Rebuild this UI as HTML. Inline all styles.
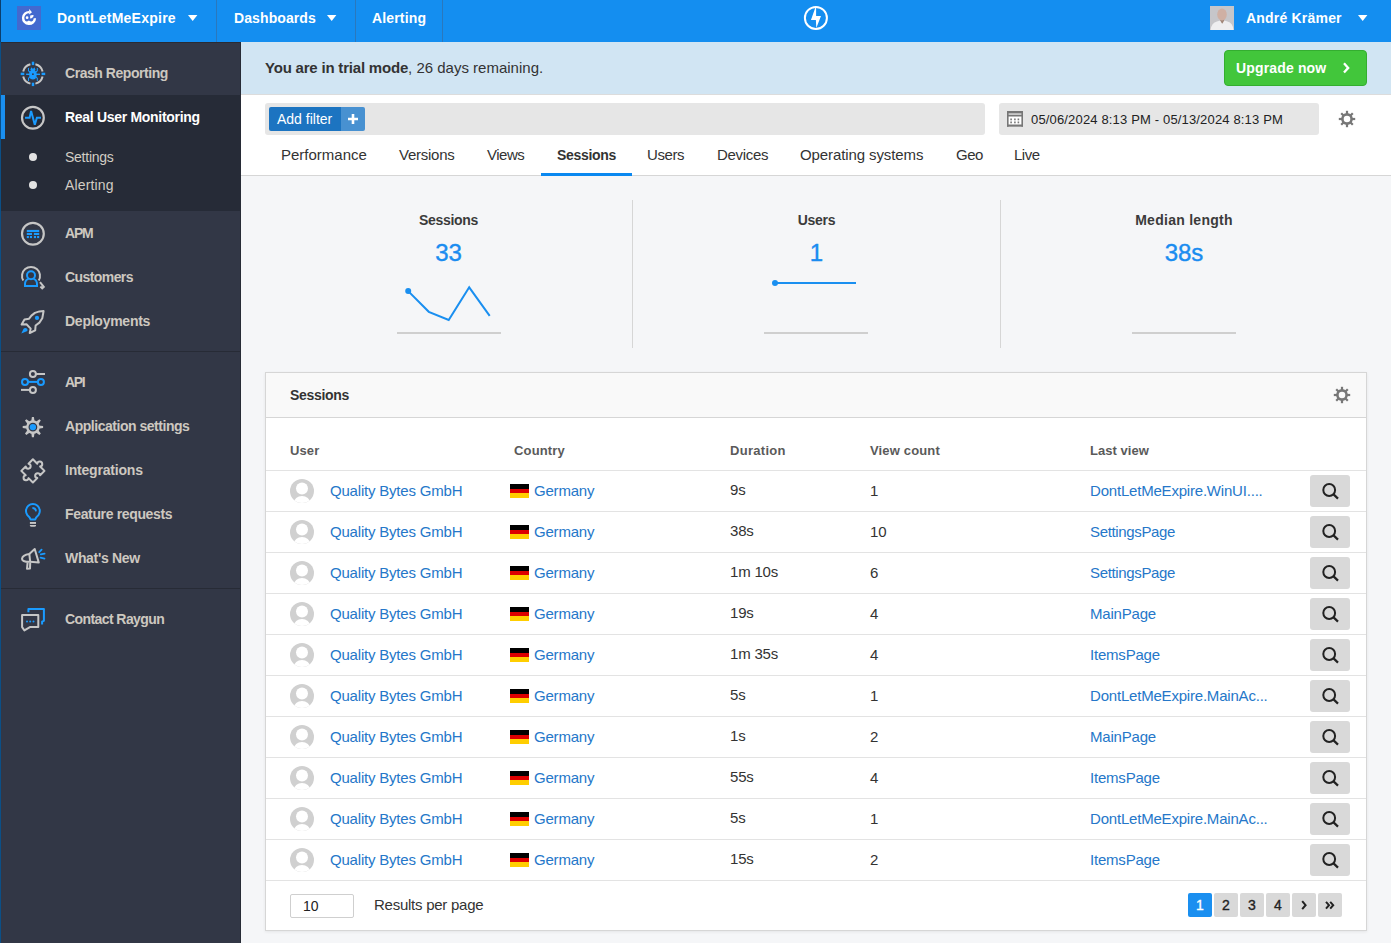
<!DOCTYPE html>
<html><head><meta charset="utf-8">
<style>
*{box-sizing:border-box;margin:0;padding:0}
html,body{width:1391px;height:943px;overflow:hidden;background:#f5f6f8;font-family:"Liberation Sans",sans-serif;color:#333}
.abs{position:absolute}
#hdr{position:absolute;left:0;top:0;width:1391px;height:42px;background:#148ef0}
#hdr .edge{position:absolute;left:0;top:0;width:1px;height:42px;background:#0b3f6e}
.htxt{position:absolute;top:0;height:36px;line-height:36px;color:#fff;font-weight:bold;font-size:14px;white-space:nowrap}
.tri{position:absolute;top:15px;width:10px;height:6px}
.hdiv{position:absolute;top:0;width:1px;height:42px;background:#2a78bd}
#side{position:absolute;left:0;top:42px;width:241px;height:901px;background:#323746}
#side .edge{position:absolute;left:0;top:0;width:1px;height:901px;background:#0b4f86}
#side .rb{position:absolute;right:0;top:0;width:1px;height:901px;background:#272b36}
.sitem{position:absolute;left:65px;color:#cdc8c0;font-weight:bold;font-size:14px;white-space:nowrap;line-height:20px}
.sub{position:absolute;left:65px;color:#d2cdc4;font-size:14px;white-space:nowrap;line-height:20px}
.dot{position:absolute;left:29px;width:8px;height:8px;border-radius:50%;background:#e3e3e3}
.ico{position:absolute;left:19px}
#main{position:absolute;left:0;top:0;width:1391px;height:943px}
.link{color:#2577c9}
.txt15{position:absolute;line-height:20px;font-size:15px;white-space:nowrap}
.tab{position:absolute;top:145px;line-height:20px;font-size:15px;color:#333;white-space:nowrap}
.stl{position:absolute;top:210px;line-height:20px;font-size:14px;font-weight:bold;color:#3b3b3b;text-align:center;letter-spacing:-0.3px}
.stn{position:absolute;top:238px;line-height:30px;font-size:24px;color:#1a8cf0;text-align:center;-webkit-text-stroke:0.4px #1a8cf0}
.colh{position:absolute;top:441px;line-height:20px;font-size:13px;font-weight:bold;color:#5a5a5a;white-space:nowrap;letter-spacing:0.3px}
.rowline{position:absolute;left:266px;width:1100px;height:1px;background:#e3e3e3}
.cell{position:absolute;line-height:20px;font-size:15px;color:#333;white-space:nowrap;letter-spacing:-0.2px}
.flag{position:absolute;left:510px;width:19px;height:14px}
.flag i{display:block;height:4.667px}
.sbtn{position:absolute;left:1310px;width:40px;height:32px;background:#d9d9d9;border-radius:3px}
.sbtn svg{display:block}
.pg{position:absolute;top:893px;width:24px;height:24px;background:#d9d9d9;border-radius:2px;line-height:24px;text-align:center;font-size:14px;color:#222;-webkit-text-stroke:0.35px #222}
.pg svg{display:block}
.pg.act{background:#1a8ff0;color:#fff;-webkit-text-stroke:0.35px #fff}
.cell.link{color:#2577c9}

</style></head><body>
<div id="hdr">
  <div class="edge"></div>
  <div class="abs" style="left:17px;top:6px;width:24px;height:24px;background:#4369cf"></div>
  <svg class="abs" style="left:17px;top:6px" width="24" height="24" viewBox="0 0 24 24">
    <path d="M12.3 6.1 A5.9 5.9 0 1 0 17.9 12.2" fill="none" stroke="#fff" stroke-width="2.4"/>
    <path d="M12.2 3.1 L15 6.2 L12.2 8.6 Z" fill="#fff"/>
    <path d="M6.6 14 Q9.2 16.8 11.9 14.6 Q14.7 16.8 17.5 14 A5.9 5.9 0 0 1 6.6 14 Z" fill="#fff"/>
    <circle cx="10.1" cy="11.7" r="1.35" fill="#fff"/>
    <path d="M13.1 12.6 L13.2 9.4 Q15.6 8.6 16.7 9.2 Q16.4 12.1 13.1 12.6 Z" fill="#fff"/>
  </svg>
  <div class="htxt" style="left:57px;letter-spacing:0.25px">DontLetMeExpire</div>
  <svg class="tri" style="left:188px" width="10" height="6" viewBox="0 0 10 6"><polygon points="0,0 9.4,0 4.7,6" fill="#fff"/></svg>
  <div class="hdiv" style="left:216px"></div>
  <div class="htxt" style="left:234px;letter-spacing:0.1px">Dashboards</div>
  <svg class="tri" style="left:327px" width="10" height="6" viewBox="0 0 10 6"><polygon points="0,0 9.4,0 4.7,6" fill="#fff"/></svg>
  <div class="hdiv" style="left:355px"></div>
  <div class="htxt" style="left:372px;letter-spacing:0.15px">Alerting</div>
  <div class="hdiv" style="left:442px"></div>
  <svg class="abs" style="left:803px;top:5px" width="26" height="26" viewBox="0 0 26 26">
    <circle cx="12.9" cy="12.9" r="11" fill="none" stroke="#fff" stroke-width="2"/>
    <path d="M12.2 3.1 L7.95 14.9 L12.9 14.9 L13.3 22.9 L18 11.1 L13.1 11.1 L13.1 3.1 Z" fill="#fff"/>
  </svg>
  <svg class="abs" style="left:1210px;top:6px" width="24" height="24" viewBox="0 0 24 24">
    <rect width="24" height="24" fill="#c6c6ca"/>
    <path d="M10 13 L9.8 17.5 L14.4 17.5 L14.2 13Z" fill="#a08678"/>
    <ellipse cx="12" cy="8.4" rx="4.8" ry="6" fill="#cfb0a4"/>
    <path d="M0.5 24 Q1.5 17 7 15.6 L10.2 14.6 L12.2 18 L14.2 14.6 L17.5 15.6 Q22.8 17 23.5 24 Z" fill="#eeeef0"/>
  </svg>
  <div class="htxt" style="left:1246px;letter-spacing:0.2px">André Krämer</div>
  <svg class="tri" style="left:1358px" width="10" height="6" viewBox="0 0 10 6"><polygon points="0,0 9.4,0 4.7,6" fill="#fff"/></svg>
</div>

<div id="side">
  <div class="edge"></div>
  <div class="abs" style="left:1px;top:0;width:240px;height:1px;background:#2a2b33"></div>
  <div class="abs" style="left:1px;top:53px;width:239px;height:116px;background:#262b37"></div>
  <div class="abs" style="left:1px;top:53px;width:4px;height:44px;background:#1a8ff0"></div>
  <div class="abs" style="left:1px;top:309px;width:239px;height:1px;background:#272b36"></div>
  <div class="abs" style="left:1px;top:546px;width:239px;height:1px;background:#272b36"></div>
  <div class="rb"></div>
  <!-- icons: svg at left 15, top = regiontop-42 -->
  <svg class="abs" style="left:15px;top:13px" width="36" height="36" viewBox="0 0 36 36">
    <g fill="none" stroke="#c6c6c6" stroke-width="2">
      <path d="M20.4 9.2 A9.8 9.8 0 0 1 27.6 16.4"/><path d="M27.6 21.4 A9.8 9.8 0 0 1 20.4 28.6"/>
      <path d="M15.4 28.6 A9.8 9.8 0 0 1 8.2 21.4"/><path d="M8.2 16.4 A9.8 9.8 0 0 1 15.4 9.2"/>
    </g>
    <g fill="#1a9bff">
      <rect x="16.8" y="6.7" width="2.4" height="3.4"/><rect x="16.8" y="27.7" width="2.4" height="3.4"/>
      <rect x="5.7" y="17.7" width="3.6" height="2.4"/><rect x="26.6" y="17.7" width="3.6" height="2.4"/>
      <ellipse cx="17.9" cy="19.6" rx="3.8" ry="5"/>
      <path d="M15.2 15 L16.4 12.2 L17.3 13.6 L18.5 13.6 L19.4 12.2 L20.6 15Z"/>
      <rect x="11.1" y="18.6" width="13.9" height="1.4"/>
      <path d="M13 13 L14 13 L14 15.5 L15.5 17 L14.8 17.8 L13 16Z"/>
      <path d="M22.8 13 L21.8 13 L21.8 15.5 L20.3 17 L21 17.8 L22.8 16Z"/>
      <path d="M13 26 L14 26 L14 23.5 L15.5 22 L14.8 21.2 L13 23Z"/>
      <path d="M22.8 26 L21.8 26 L21.8 23.5 L20.3 22 L21 21.2 L22.8 23Z"/>
    </g>
    <rect x="17.1" y="18.4" width="1.6" height="1.6" fill="#323746"/>
  </svg>
  <svg class="abs" style="left:15px;top:58px" width="36" height="36" viewBox="0 0 36 36">
    <circle cx="17.9" cy="17.8" r="10.9" fill="none" stroke="#c6c6c6" stroke-width="2.2"/>
    <polyline points="10,17.8 14.6,17.8 16.1,10.9 19.8,24.7 21.9,17.8 26,17.8" fill="none" stroke="#1a9bff" stroke-width="2" stroke-linejoin="miter" stroke-miterlimit="2.5"/>
  </svg>
  <svg class="abs" style="left:15px;top:173px" width="36" height="36" viewBox="0 0 36 36">
    <circle cx="17.9" cy="18.7" r="10.9" fill="none" stroke="#c6c6c6" stroke-width="2.2"/>
    <g fill="#1a9bff"><rect x="11.8" y="14.9" width="12.4" height="2.1"/>
    <rect x="11.8" y="17.9" width="5.2" height="2.1"/><rect x="18.9" y="17.9" width="5.3" height="2.1"/>
    <rect x="11.8" y="21" width="2.1" height="2.1"/><rect x="14.9" y="21" width="2.1" height="2.1"/>
    <rect x="18.9" y="21" width="2.1" height="2.1"/><rect x="22.1" y="21" width="2.1" height="2.1"/></g>
  </svg>
  <svg class="abs" style="left:15px;top:217px" width="36" height="36" viewBox="0 0 36 36">
    <path d="M8.3 21.6 A9 9 0 1 1 23.7 21.6" fill="none" stroke="#c6c6c6" stroke-width="2"/>
    <g fill="none" stroke="#1a9bff" stroke-width="2">
      <circle cx="16" cy="16.3" r="4"/>
      <path d="M13.6 19.9 Q10 21 10 25 V27 H22 V25 Q22 21 18.4 19.9"/>
    </g>
    <path d="M25 23.2 L28.8 27.8 L27.2 29.3 L25.4 27.6" fill="none" stroke="#c6c6c6" stroke-width="2"/>
  </svg>
  <svg class="abs" style="left:15px;top:261px" width="36" height="36" viewBox="0 0 36 36">
    <path d="M28.6 8 L24.4 8.4 L19.9 9.9 L16.4 12.6 L14.1 15.7 L9.5 16.4 L6.6 21.6 L11.5 21.2 L15.7 25.6 L14.7 30 L20.2 27.4 L20.6 22.5 L24.4 19.6 L27.3 15.3 Z" fill="none" stroke="#c6c6c6" stroke-width="2" stroke-linejoin="round"/>
    <circle cx="22" cy="14.9" r="2.1" fill="#1a9bff"/>
    <path d="M6.3 30.6 L8.6 25.8 A2.2 2.2 0 0 1 12.4 27.9 Z" fill="#1a9bff"/>
  </svg>
  <svg class="abs" style="left:15px;top:322px" width="36" height="36" viewBox="0 0 36 36">
    <g fill="none" stroke="#c6c6c6" stroke-width="2"><circle cx="17.9" cy="10" r="3"/><path d="M20.9 10 H30"/>
    <circle cx="17.9" cy="25.9" r="3"/><path d="M6 25.9 H14.9"/></g>
    <g fill="none" stroke="#1a9bff" stroke-width="2"><circle cx="10" cy="17.9" r="3"/><circle cx="25.9" cy="17.9" r="3"/><path d="M13 17.9 H22.9"/></g>
  </svg>
  <svg class="abs" style="left:15px;top:366px" width="36" height="36" viewBox="0 0 36 36">
    <g fill="#c6c6c6"><polygon points="16.20,13.60 16.90,8.90 18.90,8.90 19.60,13.60"/><polygon points="20.59,14.01 24.41,11.18 25.82,12.59 22.99,16.41"/><polygon points="23.40,17.40 28.10,18.10 28.10,20.10 23.40,20.80"/><polygon points="22.99,21.79 25.82,25.61 24.41,27.02 20.59,24.19"/><polygon points="19.60,24.60 18.90,29.30 16.90,29.30 16.20,24.60"/><polygon points="15.21,24.19 11.39,27.02 9.98,25.61 12.81,21.79"/><polygon points="12.40,20.80 7.70,20.10 7.70,18.10 12.40,17.40"/><polygon points="12.81,16.41 9.98,12.59 11.39,11.18 15.21,14.01"/></g>
    <circle cx="17.9" cy="19.1" r="5.6" fill="none" stroke="#c6c6c6" stroke-width="2.4"/>
    <circle cx="17.9" cy="19.1" r="3.2" fill="#1a9bff"/>
  </svg>
  <svg class="abs" style="left:15px;top:410px" width="36" height="36" viewBox="0 0 36 36">
    <g transform="rotate(45 17.9 18.9)">
    <path d="M9.7 10.7 L15.9 10.7 A2.5 2.5 0 1 1 19.9 10.7 L26.1 10.7 L26.1 16.9 A2.5 2.5 0 1 0 26.1 20.9 L26.1 27.1 L19.9 27.1 A2.5 2.5 0 1 1 15.9 27.1 L9.7 27.1 L9.7 20.9 A2.5 2.5 0 1 0 9.7 16.9 Z" fill="none" stroke="#c6c6c6" stroke-width="2" stroke-linejoin="round"/>
    </g>
  </svg>
  <svg class="abs" style="left:15px;top:454px" width="36" height="36" viewBox="0 0 36 36">
    <path d="M15.6 23.6 Q15 21.2 12.25 18.9 A6.9 6.9 0 1 1 23.55 18.9 Q20.8 21.2 20.2 23.6 Z" fill="none" stroke="#1a9bff" stroke-width="2" stroke-linejoin="round"/>
    <path d="M17.4 12 A3.6 3.6 0 0 1 21 15.4" fill="none" stroke="#1a9bff" stroke-width="1.8"/>
    <rect x="14.9" y="26" width="6.1" height="1.9" fill="#c6c6c6"/>
    <path d="M14.9 29 H21 V30 Q20.5 30.8 19.5 30.8 H16.4 Q15.4 30.8 14.9 30Z" fill="#c6c6c6"/>
  </svg>
  <svg class="abs" style="left:15px;top:498px" width="36" height="36" viewBox="0 0 36 36">
    <g fill="none" stroke="#c6c6c6" stroke-width="2" stroke-linejoin="round">
      <path d="M14.3 13.9 L19.7 9 L23.8 22.6 L15.2 21.8"/>
      <path d="M14.3 13.9 Q7.5 14.8 7 18.8 Q7.3 22 15.2 21.8 Z"/>
      <path d="M12.6 22.4 L12 28.8 L15 28.4 L15.2 22.6"/>
    </g>
    <g stroke="#1a9bff" stroke-width="1.8" stroke-linecap="round">
      <path d="M24.2 12.2 L26.6 9.6"/><path d="M25.8 14.4 L29.6 13.7"/><path d="M25.6 17.6 L29.5 18.6"/>
    </g>
  </svg>
  <svg class="abs" style="left:15px;top:559px" width="36" height="36" viewBox="0 0 36 36">
    <path d="M13.4 11.2 V8.1 H28.9 V19.8 L27.1 20.6 V23.4" fill="none" stroke="#1a9bff" stroke-width="2" stroke-linejoin="round"/>
    <path d="M7.1 14.1 H23.3 V26.1 H14.9 L9.4 29.4 L7.1 26.1 Z" fill="none" stroke="#c6c6c6" stroke-width="2" stroke-linejoin="round"/>
    <g fill="#1a9bff"><circle cx="12" cy="20.4" r="1"/><circle cx="15.2" cy="20.4" r="1"/><circle cx="18.5" cy="20.4" r="1"/></g>
  </svg>
  <div class="sitem" style="top:21px;letter-spacing:-0.45px">Crash Reporting</div>
  <div class="sitem" style="top:65px;color:#fff;letter-spacing:-0.3px">Real User Monitoring</div>
  <div class="dot" style="top:111px"></div>
  <div class="sub" style="top:105px;letter-spacing:-0.25px">Settings</div>
  <div class="dot" style="top:139px"></div>
  <div class="sub" style="top:133px;letter-spacing:0.15px">Alerting</div>
  <div class="sitem" style="top:181px;letter-spacing:-1.2px">APM</div>
  <div class="sitem" style="top:225px;letter-spacing:-0.58px">Customers</div>
  <div class="sitem" style="top:269px;letter-spacing:-0.25px">Deployments</div>
  <div class="sitem" style="top:330px;letter-spacing:-1.3px">API</div>
  <div class="sitem" style="top:374px;letter-spacing:-0.47px">Application settings</div>
  <div class="sitem" style="top:418px;letter-spacing:-0.2px">Integrations</div>
  <div class="sitem" style="top:462px;letter-spacing:-0.35px">Feature requests</div>
  <div class="sitem" style="top:506px;letter-spacing:-0.33px">What's New</div>
  <div class="sitem" style="top:567px;letter-spacing:-0.58px">Contact Raygun</div>
</div>

<div id="main">
<div class="abs" style="left:241px;top:42px;width:1150px;height:52px;background:#d1e5f3"></div>
<div class="abs" style="left:241px;top:94px;width:1150px;height:1px;background:#dcdcdc"></div>
<div class="abs" style="left:241px;top:95px;width:1150px;height:80px;background:#fff"></div>
<div class="abs" style="left:241px;top:175px;width:1150px;height:1px;background:#d6d6d6"></div>
<div class="txt15" style="left:265px;top:58px;color:#333"><b style="letter-spacing:-0.2px">You are in trial mode</b>, 26 days remaining.</div>
<div class="abs" style="left:1224px;top:50px;width:143px;height:36px;background:#42c63b;border:1px solid #34ae30;border-radius:4px"></div>
<div class="abs" style="left:1236px;top:58px;line-height:20px;font-size:14px;font-weight:bold;color:#fff;letter-spacing:0.15px;white-space:nowrap">Upgrade now</div>
<svg class="abs" style="left:1340px;top:60px" width="10" height="16" viewBox="0 0 10 16"><path d="M4 3.3 L8.2 7.9 L4 12.5" fill="none" stroke="#fff" stroke-width="2.3"/></svg>

<div class="abs" style="left:265px;top:103px;width:720px;height:32px;background:#e6e6e6;border-radius:3px"></div>
<div class="abs" style="left:269px;top:107px;width:72px;height:24px;background:#1c74c1;border-radius:2px 0 0 2px"></div>
<div class="abs" style="left:341px;top:107px;width:24px;height:24px;background:#4891d1;border-radius:0 2px 2px 0"></div>
<div class="abs" style="left:277px;top:109px;line-height:20px;font-size:14px;color:#fff;white-space:nowrap">Add filter</div>
<svg class="abs" style="left:341px;top:107px" width="24" height="24" viewBox="0 0 24 24"><path d="M12 7 V17 M7 12 H17" stroke="#fff" stroke-width="2.6"/></svg>
<div class="abs" style="left:999px;top:103px;width:320px;height:32px;background:#e6e6e6;border-radius:3px"></div>
<svg class="abs" style="left:1006px;top:110px" width="18" height="18" viewBox="0 0 18 18"><rect x="1.5" y="1.5" width="15" height="15" fill="#fff"/><g fill="#777"><rect x="1" y="1" width="16" height="2.5"/><rect x="1" y="4.6" width="16" height="1.9"/><rect x="1" y="14.5" width="16" height="2.2"/><rect x="1" y="1" width="1.6" height="15.7"/><rect x="15.4" y="1" width="1.6" height="15.7"/>
<rect x="4.3" y="8.5" width="1.6" height="1.8"/><rect x="8.1" y="8.5" width="1.6" height="1.8"/><rect x="11.6" y="8.5" width="1.6" height="1.8"/>
<rect x="4.3" y="11.5" width="1.6" height="1.8"/><rect x="8.1" y="11.5" width="1.6" height="1.8"/><rect x="11.6" y="11.5" width="1.6" height="1.8"/></g></svg>
<div class="abs" style="left:1031px;top:110px;line-height:20px;font-size:13px;color:#222;letter-spacing:0.16px;white-space:nowrap">05/06/2024 8:13 PM - 05/13/2024 8:13 PM</div>
<svg class="abs" style="left:1338px;top:110px" width="18" height="18" viewBox="0 0 18 18"><g fill="#777"><rect x="7.9" y="0.8" width="2.2" height="4" transform="rotate(0 9 9)"/><rect x="7.9" y="0.8" width="2.2" height="4" transform="rotate(45 9 9)"/><rect x="7.9" y="0.8" width="2.2" height="4" transform="rotate(90 9 9)"/><rect x="7.9" y="0.8" width="2.2" height="4" transform="rotate(135 9 9)"/><rect x="7.9" y="0.8" width="2.2" height="4" transform="rotate(180 9 9)"/><rect x="7.9" y="0.8" width="2.2" height="4" transform="rotate(225 9 9)"/><rect x="7.9" y="0.8" width="2.2" height="4" transform="rotate(270 9 9)"/><rect x="7.9" y="0.8" width="2.2" height="4" transform="rotate(315 9 9)"/></g><circle cx="9" cy="9" r="4.6" fill="none" stroke="#777" stroke-width="2.6"/></svg>

<div class="tab" style="left:281px">Performance</div>
<div class="tab" style="left:399px;letter-spacing:-0.25px">Versions</div>
<div class="tab" style="left:487px;letter-spacing:-0.5px">Views</div>
<div class="tab" style="left:557px;font-weight:bold;font-size:14px;letter-spacing:-0.3px;top:145px">Sessions</div>
<div class="abs" style="left:541px;top:173px;width:91px;height:3px;background:#0a88f0"></div>
<div class="tab" style="left:647px;letter-spacing:-0.4px">Users</div>
<div class="tab" style="left:717px;letter-spacing:-0.3px">Devices</div>
<div class="tab" style="left:800px;letter-spacing:-0.1px">Operating systems</div>
<div class="tab" style="left:956px;letter-spacing:-0.5px">Geo</div>
<div class="tab" style="left:1014px;letter-spacing:-0.5px">Live</div>

<div class="abs" style="left:632px;top:200px;width:1px;height:148px;background:#d6d6d6"></div>
<div class="abs" style="left:1000px;top:200px;width:1px;height:148px;background:#d6d6d6"></div>
<div class="stl" style="left:265px;width:367px">Sessions</div>
<div class="stn" style="left:265px;width:367px">33</div>
<div class="stl" style="left:633px;width:367px">Users</div>
<div class="stn" style="left:633px;width:367px">1</div>
<div class="stl" style="left:1001px;width:366px;letter-spacing:0.27px">Median length</div>
<div class="stn" style="left:1001px;width:366px">38s</div>
<svg class="abs" style="left:380px;top:270px" width="140" height="70" viewBox="0 0 140 70">
<polyline points="28.2,21.1 48.8,41.8 68.7,50 89.2,17.3 109.7,45.8" fill="none" stroke="#1a8ff0" stroke-width="2"/>
<circle cx="28.2" cy="21.1" r="3" fill="#1a8ff0"/>
<rect x="17" y="62" width="104" height="2" fill="#cfcfcf"/></svg>
<svg class="abs" style="left:748px;top:270px" width="140" height="70" viewBox="0 0 140 70">
<path d="M27 13 H108" stroke="#1a8ff0" stroke-width="2"/><circle cx="27" cy="13" r="3" fill="#1a8ff0"/>
<rect x="16" y="62" width="104" height="2" fill="#cfcfcf"/></svg>
<div class="abs" style="left:1132px;top:332px;width:104px;height:2px;background:#cfcfcf"></div>

<div class="abs" style="left:265px;top:372px;width:1102px;height:559px;background:#fff;border:1px solid #d6d6d6;box-shadow:0 1px 3px rgba(0,0,0,0.07)"></div>
<div class="abs" style="left:266px;top:373px;width:1100px;height:45px;background:#f9f9f9;border-bottom:1px solid #d6d6d6"></div>
<div class="abs" style="left:290px;top:385px;line-height:20px;font-size:14px;font-weight:bold;color:#333;letter-spacing:-0.3px">Sessions</div>
<svg class="abs" style="left:1333px;top:386px" width="18" height="18" viewBox="0 0 18 18"><g fill="#777"><rect x="7.9" y="0.8" width="2.2" height="4" transform="rotate(0 9 9)"/><rect x="7.9" y="0.8" width="2.2" height="4" transform="rotate(45 9 9)"/><rect x="7.9" y="0.8" width="2.2" height="4" transform="rotate(90 9 9)"/><rect x="7.9" y="0.8" width="2.2" height="4" transform="rotate(135 9 9)"/><rect x="7.9" y="0.8" width="2.2" height="4" transform="rotate(180 9 9)"/><rect x="7.9" y="0.8" width="2.2" height="4" transform="rotate(225 9 9)"/><rect x="7.9" y="0.8" width="2.2" height="4" transform="rotate(270 9 9)"/><rect x="7.9" y="0.8" width="2.2" height="4" transform="rotate(315 9 9)"/></g><circle cx="9" cy="9" r="4.6" fill="none" stroke="#777" stroke-width="2.6"/></svg>
<div class="colh" style="left:290px;letter-spacing:0.1px">User</div>
<div class="colh" style="left:514px;letter-spacing:0.15px">Country</div>
<div class="colh" style="left:730px">Duration</div>
<div class="colh" style="left:870px;letter-spacing:0.15px">View count</div>
<div class="colh" style="left:1090px;letter-spacing:0.05px">Last view</div>
<div class="rowline" style="top:470px"></div>
<div class="rowline" style="top:511px"></div>
<svg class="abs" style="left:290px;top:479px" width="24" height="24" viewBox="0 0 24 24"><defs><clipPath id="c0"><circle cx="12" cy="12" r="12"/></clipPath></defs><circle cx="12" cy="12" r="12" fill="#d0d0d0"/><g clip-path="url(#c0)" fill="#fff"><circle cx="12" cy="9.6" r="6"/><ellipse cx="12" cy="24.2" rx="8.2" ry="7.3"/></g></svg>
<div class="cell link" style="left:330px;top:481px">Quality Bytes GmbH</div>
<div class="flag" style="top:484px"><i style="background:#000"></i><i style="background:#dd0000"></i><i style="background:#ffce00"></i></div>
<div class="cell link" style="left:534px;top:481px">Germany</div>
<div class="cell" style="left:730px;top:480px">9s</div>
<div class="cell" style="left:870px;top:481px">1</div>
<div class="cell link" style="left:1090px;top:481px">DontLetMeExpire.WinUI....</div>
<div class="sbtn" style="top:475px"><svg width="40" height="32" viewBox="0 0 40 32"><circle cx="19.2" cy="15" r="5.9" fill="none" stroke="#222" stroke-width="2"/><path d="M23.3 19.1 L28 23.6" stroke="#222" stroke-width="2.2"/></svg></div>
<div class="rowline" style="top:552px"></div>
<svg class="abs" style="left:290px;top:520px" width="24" height="24" viewBox="0 0 24 24"><defs><clipPath id="c1"><circle cx="12" cy="12" r="12"/></clipPath></defs><circle cx="12" cy="12" r="12" fill="#d0d0d0"/><g clip-path="url(#c1)" fill="#fff"><circle cx="12" cy="9.6" r="6"/><ellipse cx="12" cy="24.2" rx="8.2" ry="7.3"/></g></svg>
<div class="cell link" style="left:330px;top:522px">Quality Bytes GmbH</div>
<div class="flag" style="top:525px"><i style="background:#000"></i><i style="background:#dd0000"></i><i style="background:#ffce00"></i></div>
<div class="cell link" style="left:534px;top:522px">Germany</div>
<div class="cell" style="left:730px;top:521px">38s</div>
<div class="cell" style="left:870px;top:522px">10</div>
<div class="cell link" style="left:1090px;top:522px;letter-spacing:-0.35px">SettingsPage</div>
<div class="sbtn" style="top:516px"><svg width="40" height="32" viewBox="0 0 40 32"><circle cx="19.2" cy="15" r="5.9" fill="none" stroke="#222" stroke-width="2"/><path d="M23.3 19.1 L28 23.6" stroke="#222" stroke-width="2.2"/></svg></div>
<div class="rowline" style="top:593px"></div>
<svg class="abs" style="left:290px;top:561px" width="24" height="24" viewBox="0 0 24 24"><defs><clipPath id="c2"><circle cx="12" cy="12" r="12"/></clipPath></defs><circle cx="12" cy="12" r="12" fill="#d0d0d0"/><g clip-path="url(#c2)" fill="#fff"><circle cx="12" cy="9.6" r="6"/><ellipse cx="12" cy="24.2" rx="8.2" ry="7.3"/></g></svg>
<div class="cell link" style="left:330px;top:563px">Quality Bytes GmbH</div>
<div class="flag" style="top:566px"><i style="background:#000"></i><i style="background:#dd0000"></i><i style="background:#ffce00"></i></div>
<div class="cell link" style="left:534px;top:563px">Germany</div>
<div class="cell" style="left:730px;top:562px">1m 10s</div>
<div class="cell" style="left:870px;top:563px">6</div>
<div class="cell link" style="left:1090px;top:563px;letter-spacing:-0.35px">SettingsPage</div>
<div class="sbtn" style="top:557px"><svg width="40" height="32" viewBox="0 0 40 32"><circle cx="19.2" cy="15" r="5.9" fill="none" stroke="#222" stroke-width="2"/><path d="M23.3 19.1 L28 23.6" stroke="#222" stroke-width="2.2"/></svg></div>
<div class="rowline" style="top:634px"></div>
<svg class="abs" style="left:290px;top:602px" width="24" height="24" viewBox="0 0 24 24"><defs><clipPath id="c3"><circle cx="12" cy="12" r="12"/></clipPath></defs><circle cx="12" cy="12" r="12" fill="#d0d0d0"/><g clip-path="url(#c3)" fill="#fff"><circle cx="12" cy="9.6" r="6"/><ellipse cx="12" cy="24.2" rx="8.2" ry="7.3"/></g></svg>
<div class="cell link" style="left:330px;top:604px">Quality Bytes GmbH</div>
<div class="flag" style="top:607px"><i style="background:#000"></i><i style="background:#dd0000"></i><i style="background:#ffce00"></i></div>
<div class="cell link" style="left:534px;top:604px">Germany</div>
<div class="cell" style="left:730px;top:603px">19s</div>
<div class="cell" style="left:870px;top:604px">4</div>
<div class="cell link" style="left:1090px;top:604px">MainPage</div>
<div class="sbtn" style="top:598px"><svg width="40" height="32" viewBox="0 0 40 32"><circle cx="19.2" cy="15" r="5.9" fill="none" stroke="#222" stroke-width="2"/><path d="M23.3 19.1 L28 23.6" stroke="#222" stroke-width="2.2"/></svg></div>
<div class="rowline" style="top:675px"></div>
<svg class="abs" style="left:290px;top:643px" width="24" height="24" viewBox="0 0 24 24"><defs><clipPath id="c4"><circle cx="12" cy="12" r="12"/></clipPath></defs><circle cx="12" cy="12" r="12" fill="#d0d0d0"/><g clip-path="url(#c4)" fill="#fff"><circle cx="12" cy="9.6" r="6"/><ellipse cx="12" cy="24.2" rx="8.2" ry="7.3"/></g></svg>
<div class="cell link" style="left:330px;top:645px">Quality Bytes GmbH</div>
<div class="flag" style="top:648px"><i style="background:#000"></i><i style="background:#dd0000"></i><i style="background:#ffce00"></i></div>
<div class="cell link" style="left:534px;top:645px">Germany</div>
<div class="cell" style="left:730px;top:644px">1m 35s</div>
<div class="cell" style="left:870px;top:645px">4</div>
<div class="cell link" style="left:1090px;top:645px">ItemsPage</div>
<div class="sbtn" style="top:639px"><svg width="40" height="32" viewBox="0 0 40 32"><circle cx="19.2" cy="15" r="5.9" fill="none" stroke="#222" stroke-width="2"/><path d="M23.3 19.1 L28 23.6" stroke="#222" stroke-width="2.2"/></svg></div>
<div class="rowline" style="top:716px"></div>
<svg class="abs" style="left:290px;top:684px" width="24" height="24" viewBox="0 0 24 24"><defs><clipPath id="c5"><circle cx="12" cy="12" r="12"/></clipPath></defs><circle cx="12" cy="12" r="12" fill="#d0d0d0"/><g clip-path="url(#c5)" fill="#fff"><circle cx="12" cy="9.6" r="6"/><ellipse cx="12" cy="24.2" rx="8.2" ry="7.3"/></g></svg>
<div class="cell link" style="left:330px;top:686px">Quality Bytes GmbH</div>
<div class="flag" style="top:689px"><i style="background:#000"></i><i style="background:#dd0000"></i><i style="background:#ffce00"></i></div>
<div class="cell link" style="left:534px;top:686px">Germany</div>
<div class="cell" style="left:730px;top:685px">5s</div>
<div class="cell" style="left:870px;top:686px">1</div>
<div class="cell link" style="left:1090px;top:686px">DontLetMeExpire.MainAc...</div>
<div class="sbtn" style="top:680px"><svg width="40" height="32" viewBox="0 0 40 32"><circle cx="19.2" cy="15" r="5.9" fill="none" stroke="#222" stroke-width="2"/><path d="M23.3 19.1 L28 23.6" stroke="#222" stroke-width="2.2"/></svg></div>
<div class="rowline" style="top:757px"></div>
<svg class="abs" style="left:290px;top:725px" width="24" height="24" viewBox="0 0 24 24"><defs><clipPath id="c6"><circle cx="12" cy="12" r="12"/></clipPath></defs><circle cx="12" cy="12" r="12" fill="#d0d0d0"/><g clip-path="url(#c6)" fill="#fff"><circle cx="12" cy="9.6" r="6"/><ellipse cx="12" cy="24.2" rx="8.2" ry="7.3"/></g></svg>
<div class="cell link" style="left:330px;top:727px">Quality Bytes GmbH</div>
<div class="flag" style="top:730px"><i style="background:#000"></i><i style="background:#dd0000"></i><i style="background:#ffce00"></i></div>
<div class="cell link" style="left:534px;top:727px">Germany</div>
<div class="cell" style="left:730px;top:726px">1s</div>
<div class="cell" style="left:870px;top:727px">2</div>
<div class="cell link" style="left:1090px;top:727px">MainPage</div>
<div class="sbtn" style="top:721px"><svg width="40" height="32" viewBox="0 0 40 32"><circle cx="19.2" cy="15" r="5.9" fill="none" stroke="#222" stroke-width="2"/><path d="M23.3 19.1 L28 23.6" stroke="#222" stroke-width="2.2"/></svg></div>
<div class="rowline" style="top:798px"></div>
<svg class="abs" style="left:290px;top:766px" width="24" height="24" viewBox="0 0 24 24"><defs><clipPath id="c7"><circle cx="12" cy="12" r="12"/></clipPath></defs><circle cx="12" cy="12" r="12" fill="#d0d0d0"/><g clip-path="url(#c7)" fill="#fff"><circle cx="12" cy="9.6" r="6"/><ellipse cx="12" cy="24.2" rx="8.2" ry="7.3"/></g></svg>
<div class="cell link" style="left:330px;top:768px">Quality Bytes GmbH</div>
<div class="flag" style="top:771px"><i style="background:#000"></i><i style="background:#dd0000"></i><i style="background:#ffce00"></i></div>
<div class="cell link" style="left:534px;top:768px">Germany</div>
<div class="cell" style="left:730px;top:767px">55s</div>
<div class="cell" style="left:870px;top:768px">4</div>
<div class="cell link" style="left:1090px;top:768px">ItemsPage</div>
<div class="sbtn" style="top:762px"><svg width="40" height="32" viewBox="0 0 40 32"><circle cx="19.2" cy="15" r="5.9" fill="none" stroke="#222" stroke-width="2"/><path d="M23.3 19.1 L28 23.6" stroke="#222" stroke-width="2.2"/></svg></div>
<div class="rowline" style="top:839px"></div>
<svg class="abs" style="left:290px;top:807px" width="24" height="24" viewBox="0 0 24 24"><defs><clipPath id="c8"><circle cx="12" cy="12" r="12"/></clipPath></defs><circle cx="12" cy="12" r="12" fill="#d0d0d0"/><g clip-path="url(#c8)" fill="#fff"><circle cx="12" cy="9.6" r="6"/><ellipse cx="12" cy="24.2" rx="8.2" ry="7.3"/></g></svg>
<div class="cell link" style="left:330px;top:809px">Quality Bytes GmbH</div>
<div class="flag" style="top:812px"><i style="background:#000"></i><i style="background:#dd0000"></i><i style="background:#ffce00"></i></div>
<div class="cell link" style="left:534px;top:809px">Germany</div>
<div class="cell" style="left:730px;top:808px">5s</div>
<div class="cell" style="left:870px;top:809px">1</div>
<div class="cell link" style="left:1090px;top:809px">DontLetMeExpire.MainAc...</div>
<div class="sbtn" style="top:803px"><svg width="40" height="32" viewBox="0 0 40 32"><circle cx="19.2" cy="15" r="5.9" fill="none" stroke="#222" stroke-width="2"/><path d="M23.3 19.1 L28 23.6" stroke="#222" stroke-width="2.2"/></svg></div>
<div class="rowline" style="top:880px"></div>
<svg class="abs" style="left:290px;top:848px" width="24" height="24" viewBox="0 0 24 24"><defs><clipPath id="c9"><circle cx="12" cy="12" r="12"/></clipPath></defs><circle cx="12" cy="12" r="12" fill="#d0d0d0"/><g clip-path="url(#c9)" fill="#fff"><circle cx="12" cy="9.6" r="6"/><ellipse cx="12" cy="24.2" rx="8.2" ry="7.3"/></g></svg>
<div class="cell link" style="left:330px;top:850px">Quality Bytes GmbH</div>
<div class="flag" style="top:853px"><i style="background:#000"></i><i style="background:#dd0000"></i><i style="background:#ffce00"></i></div>
<div class="cell link" style="left:534px;top:850px">Germany</div>
<div class="cell" style="left:730px;top:849px">15s</div>
<div class="cell" style="left:870px;top:850px">2</div>
<div class="cell link" style="left:1090px;top:850px">ItemsPage</div>
<div class="sbtn" style="top:844px"><svg width="40" height="32" viewBox="0 0 40 32"><circle cx="19.2" cy="15" r="5.9" fill="none" stroke="#222" stroke-width="2"/><path d="M23.3 19.1 L28 23.6" stroke="#222" stroke-width="2.2"/></svg></div>

<div class="abs" style="left:290px;top:894px;width:64px;height:24px;border:1px solid #cfcfcf;border-radius:2px;background:#fff"></div>
<div class="abs" style="left:303px;top:896px;line-height:20px;font-size:14px;color:#222">10</div>
<div class="cell" style="left:374px;top:895px;letter-spacing:-0.25px">Results per page</div>
<div class="pg act" style="left:1188px">1</div>
<div class="pg" style="left:1214px">2</div>
<div class="pg" style="left:1240px">3</div>
<div class="pg" style="left:1266px">4</div>
<div class="pg" style="left:1292px"><svg width="24" height="24" viewBox="0 0 24 24"><path d="M10.2 8.2 L13.6 12.2 L10.2 16.2" fill="none" stroke="#222" stroke-width="2"/></svg></div>
<div class="pg" style="left:1318px"><svg width="24" height="24" viewBox="0 0 24 24"><path d="M8 8.8 L11 12.2 L8 15.6 M12.2 8.8 L15.2 12.2 L12.2 15.6" fill="none" stroke="#222" stroke-width="2"/></svg></div>
</div>
</body></html>
